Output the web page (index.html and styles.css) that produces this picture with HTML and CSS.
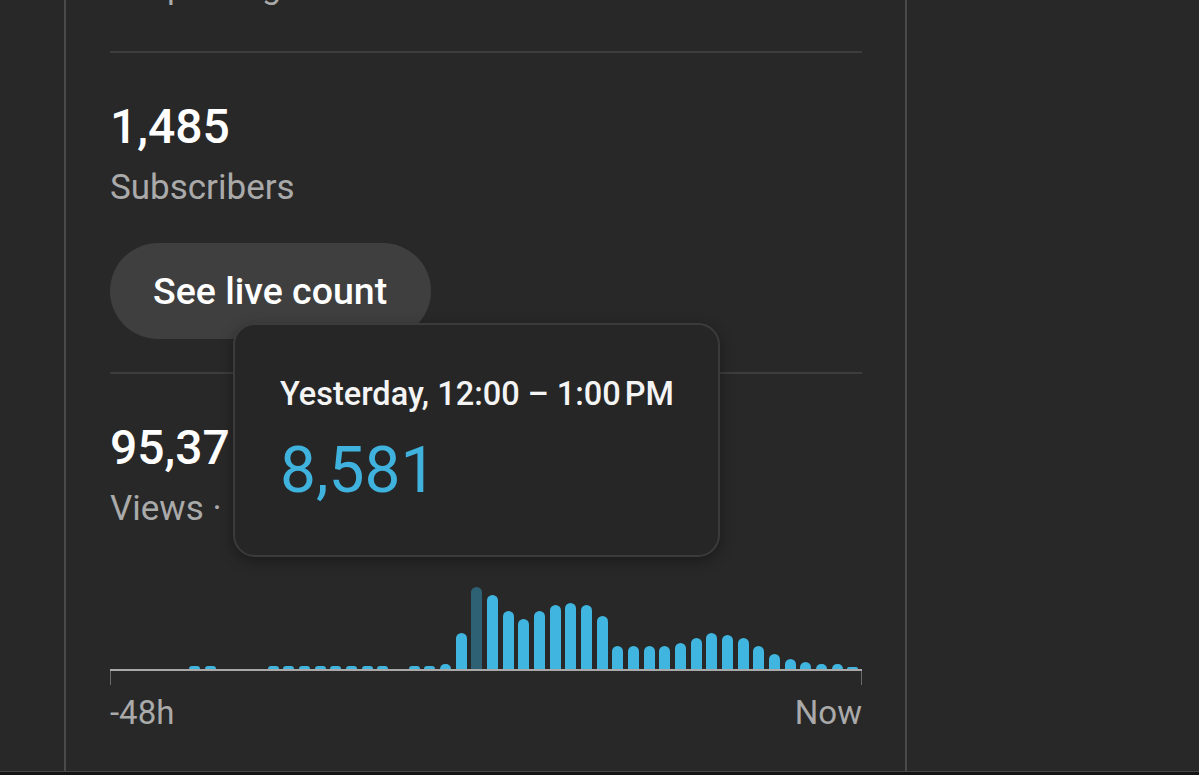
FILE: index.html
```html
<!DOCTYPE html>
<html lang="en">
<head>
<meta charset="utf-8">
<title>Realtime</title>
<link rel="stylesheet" href="styles.css">
</head>
<body>
<div class="page">
  <section class="card">
    <div class="status"><span class="dot"></span>Updating live</div>
    <div class="divider"></div>

    <div class="stat">
      <div class="value">1,485</div>
      <div class="label">Subscribers</div>
    </div>
    <button class="live-btn" type="button">See live count</button>

    <div class="divider divider-second"></div>

    <div class="stat">
      <div class="value">95,371</div>
      <div class="label">Views ·&nbsp; Last 48 hours</div>
    </div>

    <div class="chart">
      <div class="bars">
        <span class="bar" style="height:0px"></span>
        <span class="bar" style="height:0px"></span>
        <span class="bar" style="height:0px"></span>
        <span class="bar" style="height:0px"></span>
        <span class="bar" style="height:0px"></span>
        <span class="bar" style="height:3px"></span>
        <span class="bar" style="height:3px"></span>
        <span class="bar" style="height:0px"></span>
        <span class="bar" style="height:0px"></span>
        <span class="bar" style="height:0px"></span>
        <span class="bar" style="height:3px"></span>
        <span class="bar" style="height:3px"></span>
        <span class="bar" style="height:3px"></span>
        <span class="bar" style="height:3px"></span>
        <span class="bar" style="height:3px"></span>
        <span class="bar" style="height:3px"></span>
        <span class="bar" style="height:3px"></span>
        <span class="bar" style="height:3px"></span>
        <span class="bar" style="height:0px"></span>
        <span class="bar" style="height:3px"></span>
        <span class="bar" style="height:3px"></span>
        <span class="bar" style="height:5px"></span>
        <span class="bar" style="height:36px"></span>
        <span class="bar bar-active" style="height:82px"></span>
        <span class="bar" style="height:74px"></span>
        <span class="bar" style="height:58px"></span>
        <span class="bar" style="height:50px"></span>
        <span class="bar" style="height:58px"></span>
        <span class="bar" style="height:64px"></span>
        <span class="bar" style="height:66px"></span>
        <span class="bar" style="height:64px"></span>
        <span class="bar" style="height:53px"></span>
        <span class="bar" style="height:23px"></span>
        <span class="bar" style="height:23px"></span>
        <span class="bar" style="height:23px"></span>
        <span class="bar" style="height:23px"></span>
        <span class="bar" style="height:26px"></span>
        <span class="bar" style="height:31px"></span>
        <span class="bar" style="height:36px"></span>
        <span class="bar" style="height:34px"></span>
        <span class="bar" style="height:31px"></span>
        <span class="bar" style="height:23px"></span>
        <span class="bar" style="height:15px"></span>
        <span class="bar" style="height:10px"></span>
        <span class="bar" style="height:7px"></span>
        <span class="bar" style="height:5px"></span>
        <span class="bar" style="height:5px"></span>
        <span class="bar" style="height:2px"></span>
      </div>
      <div class="axis"><span class="tick"></span><span class="tick"></span></div>
      <div class="axis-labels"><span>-48h</span><span>Now</span></div>
    </div>

    <div class="tooltip">
      <div class="tooltip-title">Yesterday, 12:00 – 1:00&#8239;PM</div>
      <div class="tooltip-value">8,581</div>
    </div>
  </section>
</div>
</body>
</html>
```

FILE: styles.css
```css
* {
  box-sizing: border-box;
}

html, body {
  margin: 0;
  padding: 0;
}

body {
  background: #141414;
  font-family: "Roboto", "Noto Sans", sans-serif;
  color: #f1f1f1;
  overflow: hidden;
}

.page {
  display: flex;
  height: 772px;
  background: #282828;
  border-bottom: 1px solid #474747;
  overflow: hidden;
}

.card {
  position: relative;
  display: flex;
  flex-direction: column;
  align-items: flex-start;
  width: 843px;
  margin-top: -34px;
  margin-left: 64px;
  padding: 0 43px 0 44px;
  border-left: 2px solid #4a4a4a;
  border-right: 2px solid #4a4a4a;
}

.status {
  display: flex;
  align-items: center;
  font-size: 34px;
  line-height: 40px;
  color: #aaaaaa;
}

.dot {
  width: 22px;
  height: 22px;
  margin-right: 13px;
  border-radius: 50%;
  background: #3fb5e0;
}

.divider {
  align-self: stretch;
  height: 2px;
  margin-top: 45px;
  background: #3d3d3d;
}

.divider-second {
  margin-top: 33px;
}

.stat {
  margin-top: 46px;
}

.value {
  font-size: 48px;
  line-height: 56px;
  font-weight: 500;
  color: #ffffff;
}

.label {
  margin-top: 12px;
  font-size: 35px;
  line-height: 41px;
  color: #aaaaaa;
  white-space: nowrap;
}

.live-btn {
  margin-top: 35px;
  height: 96px;
  padding: 0 44px 0 43px;
  border: 0;
  border-radius: 48px;
  background: #3f3f3f;
  color: #ffffff;
  font-family: "Roboto", "Noto Sans", sans-serif;
  font-size: 37.5px;
  font-weight: 500;
  cursor: pointer;
}

.chart {
  align-self: stretch;
  margin-top: 40px;
}

.bars {
  display: grid;
  grid-template-columns: repeat(48, 1fr);
  align-items: end;
  height: 100px;
}

.bar {
  display: block;
  width: 11px;
  margin-left: 1px;
  background: #3fb5e0;
  border-radius: 6px 6px 0 0;
}

.bar-active {
  background: #2e6174;
}

.axis {
  display: flex;
  justify-content: space-between;
  height: 16px;
  border-top: 2px solid #a9a9a9;
}

.tick {
  width: 1px;
  height: 14px;
  background: #6a6a6a;
}

.axis-labels {
  display: flex;
  justify-content: space-between;
  margin-top: 8px;
  font-size: 33px;
  line-height: 40px;
  color: #aaaaaa;
}

.tooltip {
  position: absolute;
  left: 167px;
  top: 357px;
  width: 487px;
  height: 234px;
  padding: 50px 0 0 45px;
  background: #262626;
  border: 2px solid #3b3b3b;
  border-radius: 22px;
  box-shadow: 0 4px 14px rgba(0, 0, 0, 0.35);
}

.tooltip-title {
  font-size: 32.5px;
  line-height: 38px;
  font-weight: 500;
  color: #f4f4f4;
  white-space: nowrap;
}

.tooltip-value {
  margin-top: 22px;
  font-size: 64px;
  line-height: 72px;
  color: #3fb2de;
}
```
